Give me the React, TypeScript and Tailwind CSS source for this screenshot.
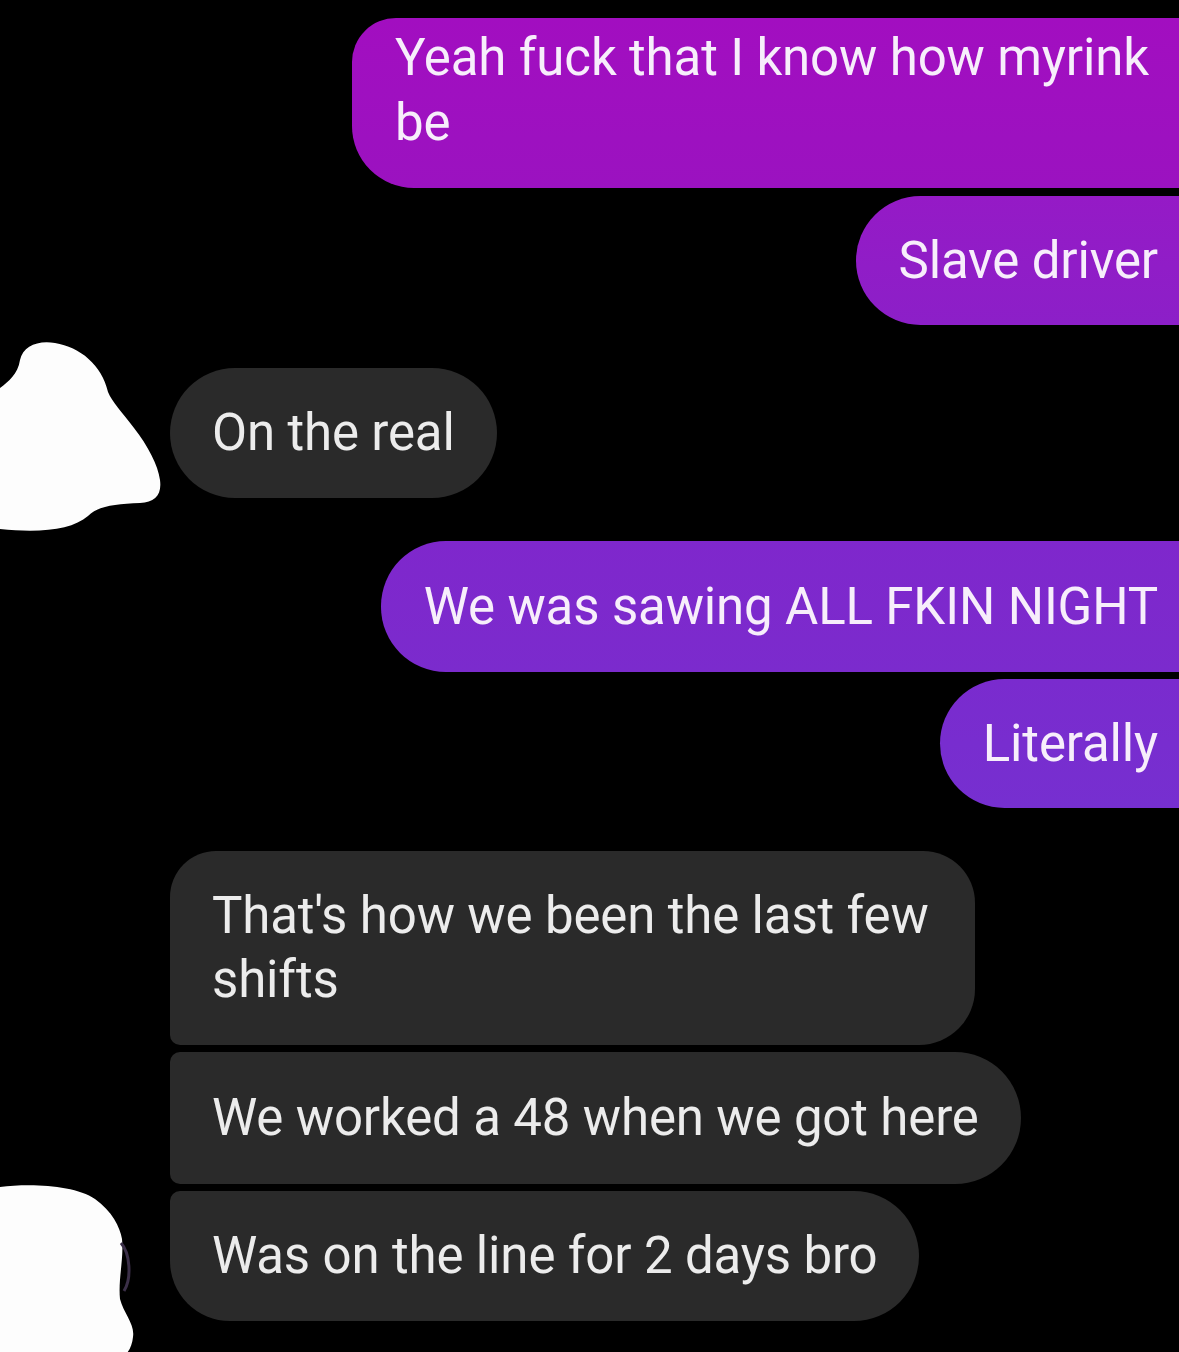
const font = { fontFamily: 'Roboto, "Noto Sans", sans-serif' }

type Msg = {
  text: string
  cls: string
}

function Sent({ text, cls }: Msg) {
  return (
    <div className="flex justify-end mr-[-24px]">
      <div className={`pl-[43px] pr-[45px] text-[51px] tracking-[-0.15px] leading-[65px] text-[#f7eefb] ${cls}`}>{text}</div>
    </div>
  )
}

function Received({ text, cls }: Msg) {
  return (
    <div className="flex pl-[170px]">
      <div className={`bg-[#2a2a2a] px-[42px] text-[51px] tracking-[-0.15px] leading-[64px] text-[#ececec] ${cls}`}>{text}</div>
    </div>
  )
}

export default function App() {
  return (
    <div className="relative w-[1179px] h-[1352px] overflow-hidden bg-black" style={font}>
      <div className="flex flex-col pt-[18px]">
        <div className="flex justify-end mr-[-24px]">
          <div className="w-[851px] pl-[43px] pr-[40px] pt-[7px] pb-[33px] text-[51px] tracking-[-0.15px] leading-[65px] text-[#f7eefb] bg-gradient-to-b from-[#a20ec0] to-[#9b12c0] rounded-tl-[44px] rounded-bl-[62px]">
            Yeah fuck that I know how myrink be
          </div>
        </div>

        <div className="mt-[8px]">
          <Sent text="Slave driver" cls="py-[32px] rounded-l-[65px] bg-gradient-to-b from-[#951ac6] to-[#8c1fc8]" />
        </div>

        <div className="relative mt-[43px]">
          <svg className="absolute left-0 top-[-28px]" width="170" height="195" viewBox="0 0 170 195">
            <path
              d="M0 48 C8 42 18 34 20 20 C23 6 38 0 55 3 C80 7 102 25 108 52 C112 62 122 72 134 88 C148 106 158 125 160 140 C162 155 155 162 140 163 C115 164 98 166 88 176 C72 190 40 193 0 189 Z"
              fill="#fdfdfd"
            />
          </svg>
          <Received text="On the real" cls="py-[33px] rounded-[65px]" />
        </div>

        <div className="mt-[43px]">
          <Sent text="We was sawing ALL FKIN NIGHT" cls="py-[33px] rounded-l-[65px] bg-gradient-to-b from-[#7f27cc] to-[#7b2bcd]" />
        </div>

        <div className="mt-[7px]">
          <Sent text="Literally" cls="py-[32px] rounded-l-[65px] bg-gradient-to-b from-[#7a2bce] to-[#762fd0]" />
        </div>

        <div className="mt-[43px] flex flex-col gap-[7px]">
          <div className="flex pl-[170px]">
            <div className="w-[805px] bg-[#2a2a2a] px-[42px] py-[33px] text-[51px] tracking-[-0.15px] leading-[64px] text-[#ececec] rounded-tl-[46px] rounded-bl-[10px] rounded-tr-[52px] rounded-br-[56px]">
              That's how we been the last few shifts
            </div>
          </div>
          <Received text="We worked a 48 when we got here" cls="py-[34px] rounded-l-[10px] rounded-r-[66px]" />
          <div className="relative">
            <svg className="absolute left-0 top-[-8px]" width="145" height="175" viewBox="0 0 145 175">
              <path
                d="M0 4 C30 0 75 2 95 16 C112 28 120 44 122 56 C124 76 118 96 120 116 C124 131 135 141 133 154 C132 166 125 175 118 175 L0 175 Z"
                fill="#fdfdfd"
              />
              <path d="M121 60 C130 70 132 95 124 108" stroke="#3b2f48" strokeWidth="3" fill="none" />
            </svg>
            <Received text="Was on the line for 2 days bro" cls="py-[33px] rounded-tl-[10px] rounded-bl-[60px] rounded-r-[65px]" />
          </div>
        </div>
      </div>
    </div>
  )
}
